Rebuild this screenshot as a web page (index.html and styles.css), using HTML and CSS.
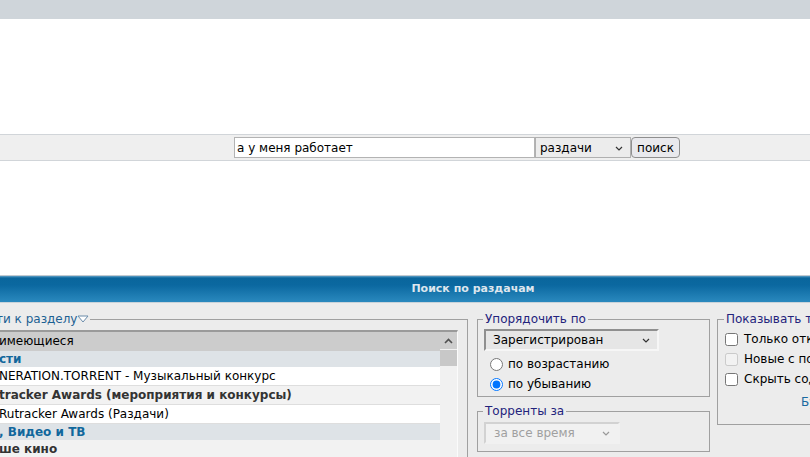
FILE: index.html
```html
<!DOCTYPE html>
<html lang="ru">
<head>
<meta charset="utf-8">
<title>Поиск</title>
<link rel="stylesheet" href="styles.css">
</head>
<body>
<div class="topbar"></div>
<div class="gap-top"></div>
<form class="searchrow">
  <input class="q" type="text" value="а у меня работает">
  <span class="selwrap where">
    <select class="sel-where"><option>раздачи</option></select>
    <svg class="chev" width="8" height="5" viewBox="0 0 8 5"><path d="M1 1l3 3 3-3" fill="none" stroke="#333" stroke-width="1.2"/></svg>
  </span>
  <button class="go" type="button">поиск</button>
</form>
<div class="gap-mid"></div>
<div class="panel">
  <div class="phead">Поиск по раздачам</div>
  <div class="pbody">
    <fieldset class="fs fs-forums">
      <legend class="lg-link"><span class="cut cut-legend"><span>Перей</span></span>ти к разделу<svg class="tri" width="12" height="8" viewBox="0 0 12 8"><path d="M1 1h10L6 7z" fill="#fff" stroke="#6a8caa" stroke-width="1"/></svg></legend>
      <div class="flist">
        <div class="rows">
          <div class="row opt selrow"><span class="cut"><span>&nbsp;Все </span></span>имеющиеся</div>
          <div class="row grp"><span class="cut"><span>Ново</span></span>сти</div>
          <div class="row opt"><span class="cut"><span>&nbsp;|- GE</span></span>NERATION.TORRENT - Музыкальный конкурс</div>
          <div class="row opt root"><span class="cut"><span>Ru</span></span>tracker Awards (мероприятия и конкурсы)</div>
          <div class="row opt"><span class="cut"><span>&nbsp;|- </span></span>Rutracker Awards (Раздачи)</div>
          <div class="row grp"><span class="cut"><span>Кино</span></span>, Видео и ТВ</div>
          <div class="row opt root"><span class="cut"><span>На</span></span>ше кино</div>
        </div>
        <div class="sbar">
          <div class="sbtn"><svg width="9" height="6" viewBox="0 0 9 6"><path d="M1 5l3.5-3.5L8 5" fill="none" stroke="#505050" stroke-width="1.6"/></svg></div>
          <div class="sthumb"></div>
        </div>
      </div>
    </fieldset>
    <div class="col2">
      <fieldset class="fs fs-order">
        <legend class="lg">Упорядочить по</legend>
        <span class="selwrap order">
          <select class="sel-order"><option>Зарегистрирован</option></select>
          <svg class="chev" width="8" height="5" viewBox="0 0 8 5"><path d="M1 1l3 3 3-3" fill="none" stroke="#333" stroke-width="1.2"/></svg>
        </span>
        <label class="rline"><input type="radio" name="o"> по возрастанию</label>
        <label class="rline"><input type="radio" name="o" checked> по убыванию</label>
      </fieldset>
      <fieldset class="fs fs-time">
        <legend class="lg">Торренты за</legend>
        <span class="selwrap time">
          <select class="sel-time" disabled><option>за все время</option></select>
          <svg class="chev" width="8" height="5" viewBox="0 0 8 5"><path d="M1 1l3 3 3-3" fill="none" stroke="#999" stroke-width="1.2"/></svg>
        </span>
      </fieldset>
    </div>
    <fieldset class="fs fs-show">
      <legend class="lg">Показывать только</legend>
      <label class="cline"><input type="checkbox"> Только открытые</label>
      <label class="cline dis"><input type="checkbox" disabled> Новые с последнего посещения</label>
      <label class="cline"><input type="checkbox"> Скрыть содержимое {...}</label>
      <div class="future"><a href="#">Будущие загрузки</a></div>
    </fieldset>
  </div>
</div>
</body>
</html>
```

FILE: styles.css
```css
html, body {
  margin: 0;
  padding: 0;
  overflow: hidden;
  background: #fff;
  font-family: "DejaVu Sans", Verdana, sans-serif;
  font-size: 12px;
  color: #000;
}
.topbar { height: 19px; background: #cfd5da; }
.gap-top { height: 115px; }
.searchrow {
  display: flex;
  align-items: center;
  height: 25px;
  padding-left: 234px;
  margin: 0;
  background: #efefef;
  border-top: 1px solid #d1d5d9;
  border-bottom: 1px solid #d1d5d9;
}
.q {
  box-sizing: border-box;
  width: 301px;
  height: 21px;
  margin: 0;
  padding: 0 2px;
  border: 1px solid #b3b3b3;
  background: #fff;
  font: 12px "DejaVu Sans", Verdana, sans-serif;
  color: #000;
  outline: none;
}
.selwrap { position: relative; display: inline-block; flex-shrink: 0; }
.chev { position: absolute; top: 50%; margin-top: -2px; }
select {
  -webkit-appearance: none;
  appearance: none;
  margin: 0;
  font: 12px "DejaVu Sans", Verdana, sans-serif;
  color: #000;
  outline: none;
  box-sizing: border-box;
  display: block;
}
.sel-where {
  width: 96px;
  height: 21px;
  padding: 0 0 0 4px;
  border: 1px solid #b0b0b0;
  background: #ececec;
}
.where .chev { right: 8px; }
.go {
  box-sizing: border-box;
  margin: 0;
  width: 49px;
  height: 21px;
  padding: 0;
  border: 1px solid #8f8f8f;
  border-radius: 4px;
  background: #e9e9ed;
  font: 12px "DejaVu Sans", Verdana, sans-serif;
  color: #000;
}
.gap-mid { height: 114px; }

.panel { background: #ececec; height: 200px; }
.phead {
  height: 26px;
  line-height: 26px;
  border-top: 1px solid #c2cad1;
  border-bottom: 1px solid #c9d3da;
  background: linear-gradient(#5e9fc6 0, #0a669c 2px, #0b68a0 35%, #2a89be 100%);
  color: #dde6ee;
  font-weight: bold;
  font-size: 11px;
  text-align: center;
  text-indent: 136px;
}
.pbody {
  display: flex;
  align-items: flex-start;
  padding-top: 9px;
  margin-left: -120px;
}
.pbody > * { flex-shrink: 0; }
.fs {
  margin: 0;
  border: 1px solid #a0a0a0;
  min-width: 0;
}
.lg {
  padding: 0 2px;
  margin-left: -1px;
  color: #23237c;
  line-height: 15px;
}
.fs-forums {
  box-sizing: border-box;
  width: 588px;
  height: 200px;
  padding: 3px 9px 0 9px;
}
.lg-link {
  padding: 0 1px 0 0;
  margin-left: 0;
  color: #1d6193;
  line-height: 15px;
  white-space: nowrap;
}
.cut {
  display: inline-block;
  direction: rtl;
  white-space: nowrap;
  width: 103px;
  vertical-align: top;
}
.cut > span { display: inline-block; direction: ltr; white-space: pre; }
.cut-legend { width: 106px; }
.tri { margin-left: 0; vertical-align: 0; }
.flist {
  display: flex;
  height: 160px;
  border-top: 2px solid #9a9a9a;
  border-left: 2px solid #9a9a9a;
  border-right: 1px solid #fbfbfb;
  background: #f2f2f2;
}
.rows { flex: 1; }
.row {
  white-space: nowrap;
  padding-left: 4px;
  overflow: hidden;
}
.opt {
  height: 18px;
  line-height: 18px;
  background: #fff;
  color: #000;
  border-bottom: 1px solid #dedede;
}
.selrow { background: #cccccc; border-bottom: 0; height: 19px; line-height: 19px; }
.root { background: #f2f2f2; font-weight: bold; color: #333; }
.grp {
  height: 16px;
  line-height: 16px;
  background: #dee3e7;
  color: #11679c;
  font-weight: bold;
}
.sbar { width: 17px; background: #f1f1f1; flex: 0 0 17px; }
.sbtn {
  height: 17px;
  background: #cdcdcd;
  display: flex;
  justify-content: center;
  align-items: center;
}
.sthumb { height: 16px; background: #c8c8c8; margin-top: 1px; }

.col2 { margin-left: 9px; width: 233px; }
.fs-order, .fs-time {
  box-sizing: border-box;
  width: 233px;
  padding: 2px 6px 2px 6px;
}
.fs-time { margin-top: 7px; padding-top: 3px; padding-bottom: 7px; }
.sel-order {
  width: 175px;
  height: 22px;
  padding-left: 7px;
  border-style: solid;
  border-width: 2px;
  border-color: #8f8f8f #f6f6f6 #f6f6f6 #8f8f8f;
  background: #e6e6e6;
}
.order .chev { right: 9px; }
.order { margin-bottom: 3px; }
.rline, .cline {
  display: flex;
  align-items: center;
  height: 20px;
  white-space: nowrap;
  color: #000;
}
.rline input { margin: 0 5px 0 6px; width: 13px; height: 13px; }
.sel-time {
  width: 136px;
  height: 22px;
  padding-left: 8px;
  border-style: solid;
  border-width: 2px;
  border-color: #c8c8c8 #f4f4f4 #f4f4f4 #c8c8c8;
  background: #f4f4f4;
  color: #808080;
}
.time .chev { right: 10px; }
.fs-show {
  box-sizing: border-box;
  margin-left: 7px;
  width: 260px;
  padding: 2px 7px 12px 7px;
}
.cline input { margin: 0 6px 0 0; width: 13px; height: 13px; }
.future { height: 20px; line-height: 20px; padding-left: 76px; margin-top: 3px; }
.future a { color: #1a6aa0; text-decoration: none; }
```
